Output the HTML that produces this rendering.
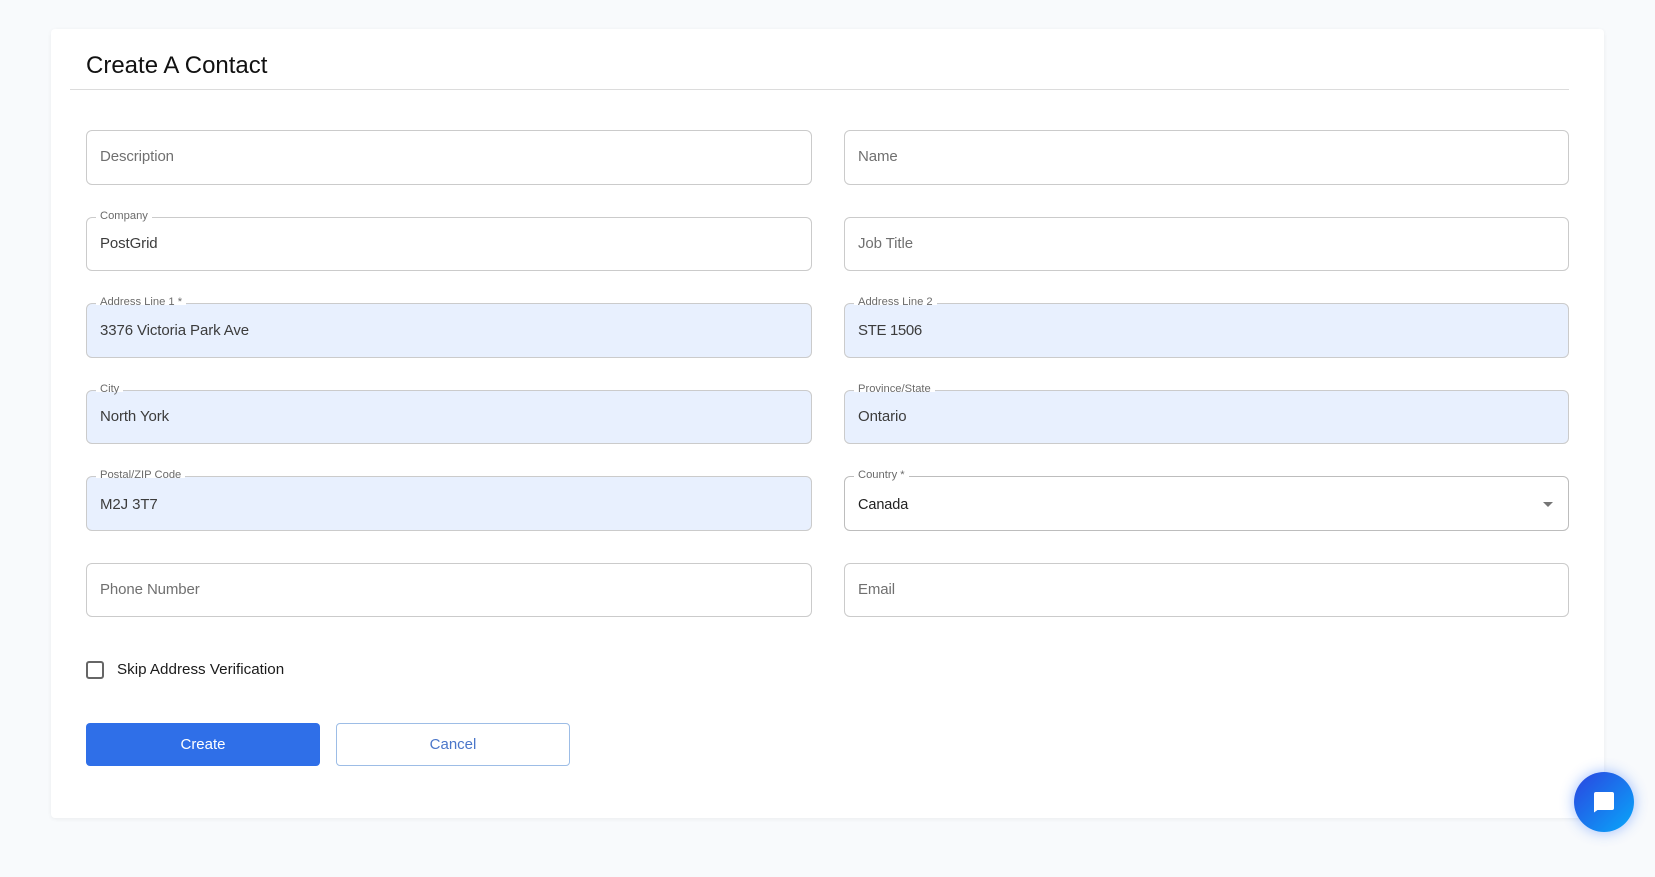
<!DOCTYPE html>
<html lang="en"><head><meta charset="utf-8"><title>Create A Contact</title>
<style>
html,body{margin:0;padding:0;width:1655px;height:877px;overflow:hidden;background:#f8fafc;font-family:"Liberation Sans",sans-serif}
.card{position:absolute;left:51px;top:29px;width:1553px;height:789px;background:#fff;border-radius:4px;box-shadow:0 1px 4px rgba(0,0,0,.06)}
h1{position:absolute;left:86px;top:49.500px;margin:0;font-size:24px;line-height:32px;font-weight:400;color:#111;white-space:nowrap}
.hr{position:absolute;left:70px;top:89px;width:1499px;height:1px;background:#dcdcdc}
.f{position:absolute;height:52px;border:1px solid #cbcbcb;border-radius:6px;box-sizing:content-box;background:#fff}
.tall{height:53px}
.l{left:86px;width:724px}.r{left:844px;width:723px}
.b{background:#e8f0fe}
.t{position:absolute;left:13px;top:16px;font-size:15px;line-height:20px;letter-spacing:-.1px;color:#3c3c3c;white-space:nowrap}
.tall .t{top:17px}
.p{color:#707070}
.lab{position:absolute;left:9px;top:-9px;padding:0 4px;font-size:11.2px;line-height:15px;color:#6b6b6b;white-space:nowrap;background:linear-gradient(#fff 0,#fff 10px,transparent 10px)}
.k{position:absolute;left:86px;top:661px;width:14px;height:14px;border:2px solid #666;border-radius:3px}
.kl{position:absolute;left:117px;top:660px;font-size:15.200px;line-height:20px;color:#1b1b1b;white-space:nowrap}
.btn{position:absolute;top:723px;height:43px;border-radius:4px;box-sizing:border-box;text-align:center;font-size:15px;line-height:41px}
.chat{position:absolute;left:1574px;top:772px;width:60px;height:60px;border-radius:50%;background:linear-gradient(135deg,#2b44e0,#08a8fa);box-shadow:0 0 14px rgba(40,110,255,.45)}
</style></head><body>
<div class="card"></div>
<h1>Create A Contact</h1>
<div class="hr"></div>

<div class="f l tall" style="top:130px"><div class="t p" style="top:16px">Description</div></div>
<div class="f r tall" style="top:130px"><div class="t p" style="top:16px">Name</div></div>

<div class="f l" style="top:217px"><div class="lab">Company</div><div class="t">PostGrid</div></div>
<div class="f r" style="top:217px"><div class="t p">Job Title</div></div>

<div class="f l b tall" style="top:303px"><div class="lab">Address Line 1 *</div><div class="t">3376 Victoria Park Ave</div></div>
<div class="f r b tall" style="top:303px"><div class="lab">Address Line 2</div><div class="t" style="letter-spacing:-.35px">STE 1506</div></div>

<div class="f l b" style="top:390px"><div class="lab">City</div><div class="t">North York</div></div>
<div class="f r b" style="top:390px"><div class="lab">Province/State</div><div class="t">Ontario</div></div>

<div class="f l b tall" style="top:476px"><div class="lab">Postal/ZIP Code</div><div class="t" style="top:18px;letter-spacing:-.1px">M2J 3T7</div></div>
<div class="f r tall" style="top:476px;border-color:#bdbdbd"><div class="lab">Country *</div><div class="t" style="top:18px;color:#222;font-size:14.5px">Canada</div>
<svg style="position:absolute;left:696px;top:24px" width="14" height="8" viewBox="0 0 14 8"><path d="M2 1h10L7 6z" fill="#757575"/></svg></div>

<div class="f l" style="top:563px"><div class="t p">Phone Number</div></div>
<div class="f r" style="top:563px"><div class="t p">Email</div></div>

<div class="k"></div>
<div class="kl">Skip Address Verification</div>

<div class="btn" style="left:86px;width:234px;background:#2f6fe8;color:#fff;line-height:43px">Create</div>
<div class="btn" style="left:336px;width:234px;background:#fff;border:1px solid #9dbde6;color:#4a76c9">Cancel</div>

<div class="chat"><svg style="position:absolute;left:19px;top:19px" width="22" height="22" viewBox="0 0 22 22"><path d="M3 1h16a2 2 0 0 1 2 2v14a2 2 0 0 1-2 2H4.500L1 21.500V3a2 2 0 0 1 2-2z" fill="#fff"/></svg></div>
</body></html>
